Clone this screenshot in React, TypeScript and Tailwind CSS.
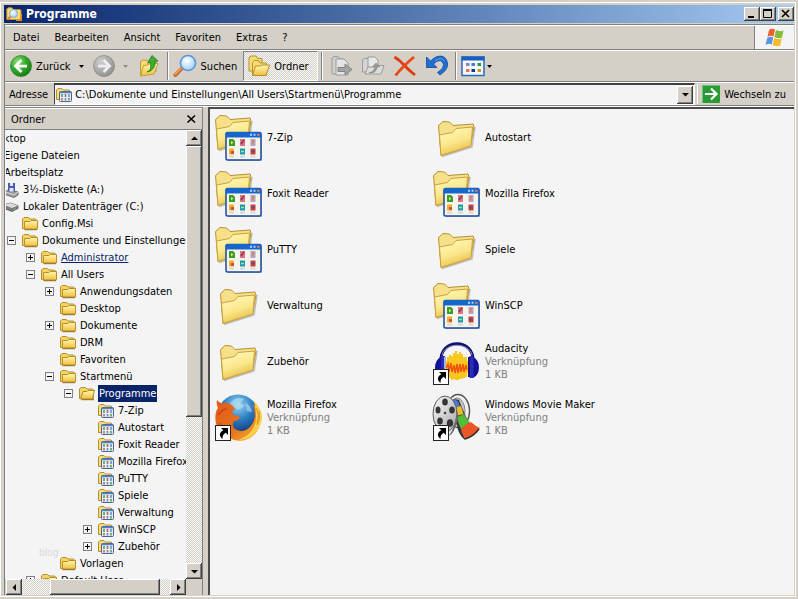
import { useState } from 'react';
import type { ReactNode } from 'react';

interface TreeNode {
  label: string;
  depth: number;
  icon?: 'folder' | 'open' | 'programs' | 'floppy' | 'drive';
  toggle?: '+' | '-';
  link?: boolean;
}

interface FileEntry {
  name: string;
  icon: 'folder' | 'group' | 'audacity' | 'firefox' | 'moviemaker';
  details?: string[];
}

const INDENT = 19;

const menuItems = ['Datei', 'Bearbeiten', 'Ansicht', 'Favoriten', 'Extras', '?'];

const tree: TreeNode[] = [
  { label: 'Desktop', depth: 0 },
  { label: 'Eigene Dateien', depth: 1 },
  { label: 'Arbeitsplatz', depth: 1 },
  { label: '3½-Diskette (A:)', depth: 2, icon: 'floppy' },
  { label: 'Lokaler Datenträger (C:)', depth: 2, icon: 'drive' },
  { label: 'Config.Msi', depth: 3, icon: 'folder' },
  { label: 'Dokumente und Einstellungen', depth: 3, icon: 'folder', toggle: '-' },
  { label: 'Administrator', depth: 4, icon: 'folder', toggle: '+', link: true },
  { label: 'All Users', depth: 4, icon: 'folder', toggle: '-' },
  { label: 'Anwendungsdaten', depth: 5, icon: 'folder', toggle: '+' },
  { label: 'Desktop', depth: 5, icon: 'folder' },
  { label: 'Dokumente', depth: 5, icon: 'folder', toggle: '+' },
  { label: 'DRM', depth: 5, icon: 'folder' },
  { label: 'Favoriten', depth: 5, icon: 'folder' },
  { label: 'Startmenü', depth: 5, icon: 'folder', toggle: '-' },
  { label: 'Programme', depth: 6, icon: 'open', toggle: '-' },
  { label: '7-Zip', depth: 7, icon: 'programs' },
  { label: 'Autostart', depth: 7, icon: 'programs' },
  { label: 'Foxit Reader', depth: 7, icon: 'programs' },
  { label: 'Mozilla Firefox', depth: 7, icon: 'programs' },
  { label: 'PuTTY', depth: 7, icon: 'programs' },
  { label: 'Spiele', depth: 7, icon: 'programs' },
  { label: 'Verwaltung', depth: 7, icon: 'programs' },
  { label: 'WinSCP', depth: 7, icon: 'programs', toggle: '+' },
  { label: 'Zubehör', depth: 7, icon: 'programs', toggle: '+' },
  { label: 'Vorlagen', depth: 5, icon: 'folder' },
  { label: 'Default User', depth: 4, icon: 'folder', toggle: '+' },
];

const shortcut = ['Verknüpfung', '1 KB'];

const files: FileEntry[] = [
  { name: '7-Zip', icon: 'group' },
  { name: 'Autostart', icon: 'folder' },
  { name: 'Foxit Reader', icon: 'group' },
  { name: 'Mozilla Firefox', icon: 'group' },
  { name: 'PuTTY', icon: 'group' },
  { name: 'Spiele', icon: 'folder' },
  { name: 'Verwaltung', icon: 'folder' },
  { name: 'WinSCP', icon: 'group' },
  { name: 'Zubehör', icon: 'folder' },
  { name: 'Audacity', icon: 'audacity', details: shortcut },
  { name: 'Mozilla Firefox', icon: 'firefox', details: shortcut },
  { name: 'Windows Movie Maker', icon: 'moviemaker', details: shortcut },
];

const raised =
  'bg-[#d4d0c8] shadow-[inset_-1px_-1px_#404040,inset_1px_1px_#ffffff,inset_-2px_-2px_#808080]';
const checker =
  'bg-[repeating-conic-gradient(#d4d0c8_0_25%,#f8f8f8_0_50%)] bg-[length:2px_2px]';

// Gradients shared by all icons
function IconDefs() {
  return (
    <svg width="0" height="0" className="absolute" aria-hidden="true">
      <defs>
        <linearGradient id="folderFront" x1="0" y1="0" x2="0.4" y2="1">
          <stop offset="0" stopColor="#fffbc4" />
          <stop offset="0.6" stopColor="#fbe88c" />
          <stop offset="1" stopColor="#e9bf4c" />
        </linearGradient>
        <linearGradient id="folderSmall" x1="0" y1="0" x2="0" y2="1">
          <stop offset="0" stopColor="#fff7b0" />
          <stop offset="1" stopColor="#f0bf3c" />
        </linearGradient>
        <radialGradient id="greenBall" cx="0.35" cy="0.3" r="0.75">
          <stop offset="0" stopColor="#8ede74" />
          <stop offset="0.5" stopColor="#35ab2b" />
          <stop offset="1" stopColor="#147c14" />
        </radialGradient>
        <radialGradient id="greyBall" cx="0.35" cy="0.3" r="0.75">
          <stop offset="0" stopColor="#cfcfcf" />
          <stop offset="1" stopColor="#8f8f8f" />
        </radialGradient>
        <radialGradient id="globe" cx="0.5" cy="0.25" r="0.7">
          <stop offset="0" stopColor="#9fd8f4" />
          <stop offset="0.5" stopColor="#2f80c4" />
          <stop offset="1" stopColor="#123a7c" />
        </radialGradient>
        <linearGradient id="fox" x1="0" y1="0" x2="1" y2="1">
          <stop offset="0" stopColor="#e2591a" />
          <stop offset="0.6" stopColor="#e8741c" />
          <stop offset="1" stopColor="#f8c63a" />
        </linearGradient>
        <radialGradient id="lens" cx="0.4" cy="0.35" r="0.7">
          <stop offset="0" stopColor="#ffffff" />
          <stop offset="1" stopColor="#9fd0f6" />
        </radialGradient>
        <linearGradient id="reel" x1="0" y1="0" x2="1" y2="1">
          <stop offset="0" stopColor="#fafafa" />
          <stop offset="1" stopColor="#a8a8a8" />
        </linearGradient>
      </defs>
    </svg>
  );
}

function SmallFolder({ open = false }: { open?: boolean }) {
  return (
    <svg width="16" height="16" viewBox="0 0 16 16" className="shrink-0" aria-hidden="true">
      <path d="M.5 12.500V3l1.500-1.500h4.500L8 3h5.500l1 1v8.500z" fill="#f3d566" stroke="#b98f2c" />
      {open ? (
        <path d="M1.500 13 4 5.500h4l1-1h6.500L13.500 13z" fill="url(#folderSmall)" stroke="#b08a2c" />
      ) : (
        <path d="M2.500 13V5.500H8l1-1h6.500V13z" fill="url(#folderSmall)" stroke="#b98f2c" />
      )}
      <path d="M2.500 13.700H15" stroke="#8a6a1c" />
    </svg>
  );
}

function SmallPrograms() {
  return (
    <svg width="16" height="16" viewBox="0 0 16 16" className="shrink-0" aria-hidden="true">
      <path d="M.5 12.500V3L2 1.500h4L7.500 3H13l1 1v8.500z" fill="#f7dc7c" stroke="#b98f2c" />
      <rect x="3.500" y="4.500" width="12" height="10" rx="1" fill="#e6ecf2" stroke="#4c6690" />
      <path d="M3.500 5.500h12" stroke="#4a84c4" strokeWidth="1.500" />
      <path d="M6 7v3M13 11v2.500" stroke="#4a9a54" strokeWidth="1.500" />
      <path d="M9.500 7v3M6 11v2.500" stroke="#c0605a" strokeWidth="1.500" />
      <path d="M13 7v3M9.500 11v2.500" stroke="#5c8cc0" strokeWidth="1.500" />
    </svg>
  );
}

function Floppy() {
  return (
    <svg width="16" height="16" viewBox="0 0 16 16" className="shrink-0" aria-hidden="true">
      <path d="M2 10 6 7.500l9 2.500v3l-4 2.500-9-3z" fill="#9b9b9b" stroke="#5c5c5c" strokeWidth=".8" />
      <path d="m2 10 9 3 4-3" fill="none" stroke="#dcdcdc" />
      <path d="M5 1h7v8.500H5z" fill="#4a5cb0" />
      <path d="M7 1h3v3H7zM6.500 6h4v3.500h-4z" fill="#e4e8f8" />
    </svg>
  );
}

function Drive() {
  return (
    <svg width="16" height="16" viewBox="0 0 16 16" className="shrink-0" aria-hidden="true">
      <path d="M1 6 7 4l8 2.500v3L9 12.500 1 9.500z" fill="#7c7c7c" stroke="#5a5a5a" strokeWidth=".8" />
      <path d="M1 6 7 4l8 2.500L9 9z" fill="#dadada" />
      <path d="M11 10.500 13 9.500" stroke="#4fd04f" />
    </svg>
  );
}

function BigFolderShape() {
  return (
    <g>
      <path d="M10 43.500 40 34 43 14" fill="none" stroke="#777" strokeOpacity=".45" strokeWidth="1.500" />
      <path
        d="M6.500 12.500 11 8.500 17.500 9l3.500 3.500L41 11l1 3-3.500 19L9 42.500z"
        fill="#f6e08a"
        stroke="#b8902e"
        strokeLinejoin="round"
      />
      <path
        d="M7.500 22 20.500 19.500 24 15.500l16.500-1.500-1.500 19L9 42.500z"
        fill="url(#folderFront)"
        stroke="#c9a23c"
        strokeLinejoin="round"
      />
    </g>
  );
}

function ShortcutArrow() {
  return (
    <g>
      <rect x="1.500" y="32.500" width="15" height="15" fill="#fff" stroke="#222" />
      <path d="M7 35h7v7l-2.200-2.200C9 41.500 8.500 43 8.500 46 4.500 43 5.500 39 9.300 37.300z" fill="#000" />
    </g>
  );
}

function BigIcon({ kind }: { kind: FileEntry['icon'] }) {
  const glyphs: Record<FileEntry['icon'], ReactNode> = {
    folder: <BigFolderShape />,
    group: (
      <g>
        <g transform="translate(-5 -6)">
          <BigFolderShape />
        </g>
        <path d="M48 22v26H14" fill="none" stroke="#777" strokeOpacity=".5" strokeWidth="1.500" />
        <rect x="12" y="19.500" width="35" height="27.500" rx="1.500" fill="#f4f3ee" stroke="#17499c" strokeWidth="1.500" />
        <path d="M11.500 24.500V21q0-2 2-2h32q2 0 2 2v3.500z" fill="#1667cc" />
        <path d="M36 21.800h2M39.500 21.800h2" stroke="#b8d4f8" strokeWidth="2" />
        <path d="M43 21.800h2.500" stroke="#e8785a" strokeWidth="2" />
        <path d="M15 26h4l2 2v5h-6z" fill="#3a9a2c" />
        <path d="m17 28 2.500 1.500L17 31.500z" fill="#d6f06a" />
        <path d="M26 26h5v7h-5z" fill="#d9757c" />
        <path d="m27 31 3-4" stroke="#a03048" strokeWidth="1.500" />
        <path d="M36.500 26h5v7h-5z" fill="#b9a0cc" />
        <path d="m38 31 2-4" stroke="#d08838" strokeWidth="1.500" />
        <path d="M15 35.500h5v6h-5z" fill="#f0b030" />
        <path d="M17 38h3v3h-3z" fill="#c85828" />
        <path d="M26 35.500h5v6h-5z" fill="#1c9ab4" />
        <path d="M27 38.500h3" stroke="#a6e87c" strokeWidth="1.500" />
        <path d="M36.500 35.500h5v6h-5z" fill="#c8403c" />
        <path d="M37.500 38.500h3" stroke="#38549c" strokeWidth="1.500" />
        <path d="M15 43.500h5M26 43.500h5M36.500 43.500h5" stroke="#dcd8cf" strokeWidth="2" />
      </g>
    ),
    firefox: (
      <g>
        <circle cx="24" cy="22" r="20.500" fill="url(#globe)" />
        <path d="M17 9q6-6 13-3l-4 4 5 3-7 4-4-3-5 2zM31 10q6 2 7 9l-5-1z" fill="#b4e0f4" fillOpacity=".6" />
        <path
          d="M3 7q3 4 6 3 3-1 7 1 4 2 5 5l-3 3 1 3q5 0 7 2-2 4-6 4-3 5 1 8 8 5 15-2 8-9 3-22 7 3 7 10 2 12-6 20-9 8-20 5Q6 42 2 31 0 20 4 15 2 11 3 7z"
          fill="url(#fox)"
        />
        <path d="M40 8q8 8 8 16 0 9-7 16-6 7-16 7 12-6 15-13 4-9 0-26z" fill="#f9cf4c" />
        <path d="M42 15q4 7 1 15M45 18q2 8-2 14M38 35q-3 6-9 9" fill="none" stroke="#e58a22" />
        <path d="M4 22q4-6 9-6M6 30q2 7 8 11" fill="none" stroke="#c94412" strokeWidth="1.500" />
        <ShortcutArrow />
      </g>
    ),
    audacity: (
      <g>
        <path
          d="M14.500 24v12M16 20v18M18 18v23M20 19v24M22 16v26M24 14v29M26 17v26M28 15v27M30 17v25M32 20v21M34 20v20M35.500 24v12"
          stroke="#f8c820"
          strokeWidth="2"
        />
        <path
          d="m14 31 2-4 1 8 2-9 1 9 2-7 1 8 2-9 1 9 2-9 1 8 2-8 1 8 2-7 1 5"
          fill="none"
          stroke="#f2540c"
          strokeWidth="1.500"
        />
        <path d="M9 25C7 .500 43 .500 41 25" fill="none" stroke="#11116c" strokeWidth="3" />
        <path d="M10 18C13 5 37 5 40 18" fill="none" stroke="#8080cc" strokeWidth="1" />
        <path d="M9 20Q3 23 3 30.500T9 40z" fill="#10109a" />
        <path d="M9 19h4v21H9z" fill="#2c2cb4" />
        <path d="M12 20h2v20h-2z" fill="#b0b0e0" />
        <path d="M41 20q6 3 6 10.500T41 41z" fill="#10109a" />
        <path d="M37.500 19h4v22h-4z" fill="#2c2cb4" />
        <path d="M36 20h2v20h-2z" fill="#14147c" />
        <ShortcutArrow />
      </g>
    ),
    moviemaker: (
      <g>
        <ellipse cx="26" cy="18" rx="11.500" ry="16.500" fill="#f0f0f0" stroke="#555" strokeWidth="1.500" />
        <ellipse cx="25" cy="18" rx="8" ry="13" fill="#c4c4c4" stroke="#8a8a8a" />
        <path d="M18 8q4-3 9-1l4 10 5 11 5 7-10 9-6-11-4-11z" fill="#3a3a3a" />
        <path d="M19 7.500q4-2 7 1l2 5-7 2q-1-5-2-8z" fill="#4878d8" />
        <path d="m22 15 7-2 2.500 8-7.500 2z" fill="#f0bc24" />
        <path d="m25 24 7-3q2 5 6 8l-9 7q-3-6-4-12z" fill="#56bc38" />
        <path d="M29 36q5-5 10-7 4 4 9 6-6 8-14 11-4-4-5-10z" fill="#ec5624" />
        <path d="M26 34q2 8 7 12 8-2 14-10" fill="none" stroke="#2c2c2c" strokeWidth="1.500" />
        <ellipse cx="13" cy="21" rx="12" ry="18" fill="url(#reel)" stroke="#5c5c5c" />
        <path d="M24.500 15q3 9-1 19-3 8-7 9 8-10 8-28z" fill="#6d6d6d" />
        <g fill="#353535">
          <ellipse cx="13" cy="9" rx="2.800" ry="3.500" />
          <ellipse cx="6" cy="17" rx="2.500" ry="3.500" />
          <ellipse cx="20" cy="17" rx="2.800" ry="3.500" />
          <ellipse cx="8" cy="28" rx="2.800" ry="3.500" />
          <ellipse cx="18" cy="30" rx="3.200" ry="3.800" />
          <circle cx="13" cy="20" r="1.200" />
        </g>
        <ShortcutArrow />
      </g>
    ),
  };
  return (
    <svg width="48" height="48" viewBox="0 0 48 48" className="shrink-0" aria-hidden="true">
      {glyphs[kind]}
    </svg>
  );
}

function TreeIcon({ kind }: { kind: TreeNode['icon'] }) {
  if (kind === 'folder') return <SmallFolder />;
  if (kind === 'open') return <SmallFolder open />;
  if (kind === 'programs') return <SmallPrograms />;
  if (kind === 'floppy') return <Floppy />;
  if (kind === 'drive') return <Drive />;
  return <span className="w-4 shrink-0" />;
}

function Triangle({ dir, color = '#000' }: { dir: 'up' | 'down' | 'left' | 'right'; color?: string }) {
  const paths = {
    up: 'M0 5h7L3.500 1.500z',
    down: 'M0 2h7L3.500 5.500z',
    left: 'M5 0v7L1.500 3.500z',
    right: 'M2 0v7l3.500-3.500z',
  };
  return (
    <svg width="7" height="7" viewBox="0 0 7 7" aria-hidden="true">
      <path d={paths[dir]} fill={color} />
    </svg>
  );
}

function SmallTriangle({ color = '#000' }: { color?: string }) {
  return (
    <svg width="5" height="3" viewBox="0 0 5 3" aria-hidden="true">
      <path d="M0 0h5L2.500 3z" fill={color} />
    </svg>
  );
}

function ToolbarSeparator() {
  return <span className="h-7 w-[2px] shrink-0 border-l border-[#808080] border-r border-r-white" />;
}

function TitleBar() {
  return (
    <header className="flex h-[18px] items-center gap-1 bg-linear-to-r from-[#0a246a] to-[#a6caf0] pl-[2px]">
      <svg width="16" height="16" viewBox="0 0 16 16" className="shrink-0" aria-hidden="true">
        <path d="M.8 13.500V3L2 1.800h4L7.500 3.500H14l1 1v9z" fill="#f8dc74" stroke="#b98f2c" />
        <path d="M10 14h5l.5-6" fill="none" stroke="#e08c28" strokeWidth="2" />
        <circle cx="7.500" cy="7.500" r="4" fill="url(#lens)" stroke="#8aa4c8" />
        <path d="m4.500 10.500-2.500 3" stroke="#d8843c" strokeWidth="2" />
      </svg>
      <h1 className="flex-1 text-[12px] leading-[18px] font-bold text-white">Programme</h1>
      <div className="flex">
        <button aria-label="Minimieren" className={`h-[14px] w-4 ${raised}`}>
          <svg width="16" height="14" viewBox="0 0 16 14"><path d="M4 10h6" stroke="#000" strokeWidth="2" /></svg>
        </button>
        <button aria-label="Maximieren" className={`h-[14px] w-4 ${raised}`}>
          <svg width="16" height="14" viewBox="0 0 16 14">
            <path d="M3.500 2.500h8v8h-8z" fill="none" stroke="#000" />
            <path d="M3 3h9" stroke="#000" strokeWidth="2" />
          </svg>
        </button>
        <button aria-label="Schließen" className={`ml-[2px] h-[14px] w-4 ${raised}`}>
          <svg width="16" height="14" viewBox="0 0 16 14"><path d="m4 3 7 7m0-7-7 7" stroke="#000" strokeWidth="1.600" /></svg>
        </button>
      </div>
    </header>
  );
}

function MenuBar() {
  return (
    <nav className="flex h-[25px] border-t border-b border-t-white border-b-[#808080]">
      <div className="flex flex-1 items-center gap-[15px] pl-2">
        {menuItems.map((item) => (
          <button key={item}>{item}</button>
        ))}
      </div>
      <div className="flex w-10 items-center justify-center border-l border-[#808080] bg-[#f4f4f4]">
        <svg width="22" height="20" viewBox="0 0 22 20" aria-label="Windows">
          <path d="M5 2q3-2 6-.5L9.500 8.500Q6.500 7 3.500 9z" fill="#f0602c" />
          <path d="M12 2q3.500 2 7.500.5l-1.500 7Q14 11 10.500 9z" fill="#84bc3c" />
          <path d="M3.200 10q3-2 6-.5L7.700 16.500Q4.500 15 1.500 17z" fill="#5a94dc" />
          <path d="M10.200 10q3.500 2 7.500.5l-1.500 7q-4 1.500-7.500-.500z" fill="#f4bc24" />
        </svg>
      </div>
    </nav>
  );
}

function Toolbar() {
  return (
    <div role="toolbar" className="flex h-8 items-center border-t border-b border-t-white border-b-[#808080] pl-[5px]">
      <button className="flex items-center gap-1">
        <svg width="22" height="22" viewBox="0 0 24 24" aria-hidden="true">
          <circle cx="12" cy="12" r="11.500" fill="url(#greenBall)" stroke="#2a7a22" strokeWidth=".7" />
          <path d="M12.500 5.500 6 12l6.500 6.500M6.500 12H18.500" fill="none" stroke="#fff" strokeWidth="3" />
        </svg>
        Zurück
      </button>
      <button aria-label="Zurück Verlauf" className="flex w-[22px] justify-center">
        <SmallTriangle />
      </button>
      <button aria-label="Vorwärts">
        <svg width="22" height="22" viewBox="0 0 24 24" aria-hidden="true">
          <circle cx="12" cy="12" r="11.500" fill="url(#greyBall)" stroke="#808080" strokeWidth=".7" />
          <path d="M11.500 5.500 18 12l-6.500 6.500M17.500 12H5.500" fill="none" stroke="#ededed" strokeWidth="3" />
        </svg>
      </button>
      <button aria-label="Vorwärts Verlauf" className="flex w-[22px] justify-center">
        <SmallTriangle color="#8c8c8c" />
      </button>
      <button aria-label="Aufwärts" className="mr-2 pl-[2px]">
        <svg width="20" height="24" viewBox="0 0 20 24" aria-hidden="true">
          <path d="M1.500 21V7.500L4 6l5 .5 1.500 2H17v9z" fill="#f6dc74" stroke="#c49a34" />
          <path d="m1.500 22 3-10.500L9 11l2-1.500h8L15 20z" fill="url(#folderSmall)" stroke="#c49a34" />
          <path d="M8 18q5-1 3.500-9.500L8.500 9 13 1.500 19 7l-3 .5Q17 16 8 18z" fill="#3fae34" stroke="#1c7a1a" strokeWidth=".8" />
        </svg>
      </button>
      <ToolbarSeparator />
      <button className="flex items-center gap-1 pl-1">
        <svg width="24" height="24" viewBox="0 0 24 24" aria-hidden="true">
          <path d="m9.500 13.500-7 7.500" stroke="#c46a2c" strokeWidth="4" strokeLinecap="round" />
          <path d="m9.500 12.500-7 7.500" stroke="#f4a868" strokeWidth="1.500" strokeLinecap="round" />
          <circle cx="15" cy="9" r="7.500" fill="url(#lens)" stroke="#5a94d8" strokeWidth="1.600" />
        </svg>
        Suchen
      </button>
      <button
        aria-pressed="true"
        className={`ml-1.5 flex h-[30px] items-center gap-1 border border-[#808080] border-r-white border-b-white pr-2 pl-1 ${checker}`}
      >
        <svg width="22" height="24" viewBox="0 0 22 24" aria-hidden="true">
          <path d="M1 17V4l2-2h5l1.500 2.500H14V17z" fill="#f6dc74" stroke="#b98f2c" />
          <path d="M4.500 21V8.500l2-2h4L12 9h6.500v12z" fill="#f6dc74" stroke="#b98f2c" />
          <path d="m4.500 21.500 3-9.500h5l1-1h8l-3.500 10.500z" fill="url(#folderSmall)" stroke="#b98f2c" />
        </svg>
        Ordner
      </button>
      <span className="w-[3px]" />
      <ToolbarSeparator />
      <div className="flex items-center gap-2 px-1.5">
        <button aria-label="Verschieben nach">
          <svg width="24" height="24" viewBox="0 0 24 24" aria-hidden="true">
            <path d="M3 20V4l2-1.500h4L10.500 5H14V20z" fill="#d0d0ce" stroke="#9b9b9b" />
            <path d="M7 21V5h8l4 4v12z" fill="#e4e4e2" stroke="#9b9b9b" />
            <path d="M9 13.500h7V10l7 5.500-7 5.500v-3.500H9z" fill="#a4a4a4" stroke="#828282" />
          </svg>
        </button>
        <button aria-label="Kopieren nach">
          <svg width="24" height="24" viewBox="0 0 24 24" aria-hidden="true">
            <path d="M1.500 18V6l2-1.500H8V18z" fill="#d4d4d2" stroke="#9b9b9b" />
            <path d="M7 3h7l3 3v11H7z" fill="#e6e6e4" stroke="#9b9b9b" />
            <path d="m4 20 3-7h5l1-1.500h10L20 20z" fill="#dcdcda" stroke="#9b9b9b" />
            <path d="M8 18.500q5 0 6-5.500h-2.500L15 9l3.500 4H16q-1 7-8 5.500z" fill="#999" stroke="#808080" strokeWidth=".6" />
          </svg>
        </button>
        <button aria-label="Löschen">
          <svg width="24" height="24" viewBox="0 0 24 24" aria-hidden="true">
            <path d="M1.500 3q5 3 9.500 8Q16 16.500 22 21" fill="none" stroke="#dc3a10" strokeWidth="2.800" />
            <path d="M21 3q-5 4-10 9Q6 17 2.500 21.500" fill="none" stroke="#e84818" strokeWidth="2.800" />
          </svg>
        </button>
        <button aria-label="Rückgängig">
          <svg width="24" height="24" viewBox="0 0 24 24" aria-hidden="true">
            <path
              d="M1.500 3v10.500H12L8.500 10Q14 4.500 17.500 8q3.500 5-5 10.500l2.500 2.500Q24 15 22.500 8.500 20-.5 11 3 8 4.500 5.500 7z"
              fill="#1f6fd0"
              stroke="#12489a"
              strokeWidth=".8"
            />
            <path d="M10 7q6-4.500 9.500 0" fill="none" stroke="#66a8ee" />
          </svg>
        </button>
      </div>
      <ToolbarSeparator />
      <button aria-label="Ansichten" className="flex items-center gap-[2px] pl-1">
        <svg width="24" height="24" viewBox="0 0 24 24" aria-hidden="true">
          <rect x="1" y="3" width="22" height="18.500" fill="#f6f8fd" stroke="#2a68bc" strokeWidth="1.500" />
          <path d="M.5 4.500h23" stroke="#1c5cc0" strokeWidth="4" />
          <path d="M5 10.500h3.500" stroke="#8c84b4" strokeWidth="3" />
          <path d="M5 16.500h3.500" stroke="#e0744c" strokeWidth="3" />
          <path d="M10.500 10.500H14" stroke="#3c84d8" strokeWidth="3" />
          <path d="M10.500 16.500H14" stroke="#12388c" strokeWidth="3" />
          <path d="M16.500 10.500H20" stroke="#2a9a34" strokeWidth="3" />
          <path d="M16.500 16.500H20" stroke="#c89c1c" strokeWidth="3" />
        </svg>
        <SmallTriangle />
      </button>
    </div>
  );
}

function AddressBar() {
  const [path, setPath] = useState('C:\\Dokumente und Einstellungen\\All Users\\Startmenü\\Programme');

  return (
    <div className="flex h-6 items-center border-t border-b border-t-white border-b-[#808080] pr-2 pl-1">
      <label htmlFor="address" className="pr-1.5">Adresse</label>
      <div className="flex h-[22px] flex-1 items-center gap-[3px] border border-t-2 border-[#404040] border-r-white border-b-white bg-[#f4f4f4] px-px">
        <SmallPrograms />
        <input
          id="address"
          value={path}
          onChange={(e) => setPath(e.target.value)}
          className="min-w-0 flex-1 bg-transparent outline-none"
        />
        <button aria-label="Adressliste" className={`flex h-[18px] w-4 items-center justify-center ${raised}`}>
          <Triangle dir="down" />
        </button>
      </div>
      <span className="ml-[2px] h-5 border-l border-white" />
      <button className="ml-1 flex items-center gap-1">
        <svg width="18" height="18" viewBox="0 0 18 18" aria-hidden="true">
          <rect width="18" height="18" rx="1.500" fill="#2a9a34" />
          <path d="M.5 17.500V.5h17" fill="none" stroke="#6cc474" />
          <path d="m9 3.500 5.500 5.500L9 14.500M14 9H3" fill="none" stroke="#fff" strokeWidth="2.200" />
        </svg>
        Wechseln zu
      </button>
    </div>
  );
}

function FolderPane() {
  const [selected, setSelected] = useState(15);

  return (
    <aside className="flex w-[198px] shrink-0 flex-col border-t border-r border-[#808080] bg-[#f4f4f4]">
      <div className="flex h-[22px] shrink-0 items-center justify-between border-t border-b border-t-white border-b-[#808080] bg-[#d4d0c8] px-1.5">
        <h2>Ordner</h2>
        <button aria-label="Ordnerleiste schließen">
          <svg width="9" height="8" viewBox="0 0 9 8"><path d="m.5.500 7.500 7m0-7L.5 7.500" stroke="#000" strokeWidth="1.500" /></svg>
        </button>
      </div>
      <div className="flex min-h-0 flex-1 pl-px">
        <div className="relative min-w-0 flex-1 overflow-hidden">
          {/* scrolled to the right, so the outer levels run off the left edge */}
          <ul className="-ml-14">
            {tree.map((node, i) => (
              <li
                key={i}
                className="flex h-[17px] items-center whitespace-nowrap"
                style={{ paddingLeft: node.depth * INDENT }}
              >
                <span className="w-[15px] shrink-0">
                  {node.toggle && (
                    <button
                      aria-label={node.toggle === '+' ? 'Erweitern' : 'Reduzieren'}
                      className="flex size-[9px] border border-[#808080]"
                    >
                      <svg width="7" height="7" viewBox="0 0 7 7">
                        <path d={node.toggle === '+' ? 'M1 3.500h5M3.500 1v5' : 'M1 3.500h5'} stroke="#000" />
                      </svg>
                    </button>
                  )}
                </span>
                <TreeIcon kind={node.icon} />
                <button
                  onClick={() => setSelected(i)}
                  className={`ml-[3px] h-[17px] px-px ${
                    i === selected ? 'bg-[#0a246a] text-white' : node.link ? 'text-[#0a246a] underline' : ''
                  }`}
                >
                  {node.label}
                </button>
              </li>
            ))}
          </ul>
          <span className="absolute bottom-5 left-[33px] text-[10px] leading-3 text-[#d8d8d8]">blog</span>
        </div>
        <div className={`flex w-4 shrink-0 flex-col ${checker}`}>
          <button aria-label="Nach oben" className={`flex h-4 shrink-0 items-center justify-center ${raised}`}>
            <Triangle dir="up" />
          </button>
          <div className="min-h-0 flex-1">
            <div className={`h-[65%] ${raised}`} />
          </div>
          <button aria-label="Nach unten" className={`flex h-4 shrink-0 items-center justify-center ${raised}`}>
            <Triangle dir="down" />
          </button>
        </div>
      </div>
      <div className="flex h-4 shrink-0 bg-[#d4d0c8] pr-4 pl-px">
        <div className={`flex flex-1 ${checker}`}>
          <button aria-label="Nach links" className={`flex w-4 items-center justify-center ${raised}`}>
            <Triangle dir="left" />
          </button>
          <div className="flex-1">
            <div className={`ml-[19%] h-full w-[74%] ${raised}`} />
          </div>
          <button aria-label="Nach rechts" className={`flex w-4 items-center justify-center ${raised}`}>
            <Triangle dir="right" />
          </button>
        </div>
      </div>
    </aside>
  );
}

function FileList() {
  return (
    <main className="min-w-0 flex-1 overflow-hidden border-t-2 border-l-2 border-[#4c4c4c] bg-[#f4f4f4] pl-1">
      <ul className="grid grid-cols-[repeat(2,218px)]">
        {files.map((file, i) => (
          <li key={i} className="flex h-14 items-center gap-[5px]">
            <BigIcon kind={file.icon} />
            <div className="leading-[13px]">
              <p>{file.name}</p>
              {file.details?.map((line) => (
                <p key={line} className="text-[#808080]">{line}</p>
              ))}
            </div>
          </li>
        ))}
      </ul>
    </main>
  );
}

export default function App() {
  return (
    <div className="flex h-screen flex-col bg-[#d4d0c8] pt-[2px] pr-[2px] pb-[2px] font-['DejaVu_Sans_Condensed','DejaVu_Sans',sans-serif] text-[11px] leading-[17px] text-black">
      <IconDefs />
      <div className="flex min-h-0 flex-1 flex-col border border-white bg-[#d4d0c8] pt-[2px] pr-px pb-px pl-[3px]">
        <TitleBar />
        <div className="mt-px flex min-h-0 flex-1 flex-col border-t border-l border-[#808080]">
          <MenuBar />
          <Toolbar />
          <AddressBar />
          <div className="flex min-h-0 flex-1 border-t border-white">
            <FolderPane />
            <div className="w-[5px] shrink-0 cursor-col-resize" />
            <FileList />
          </div>
        </div>
      </div>
    </div>
  );
}
